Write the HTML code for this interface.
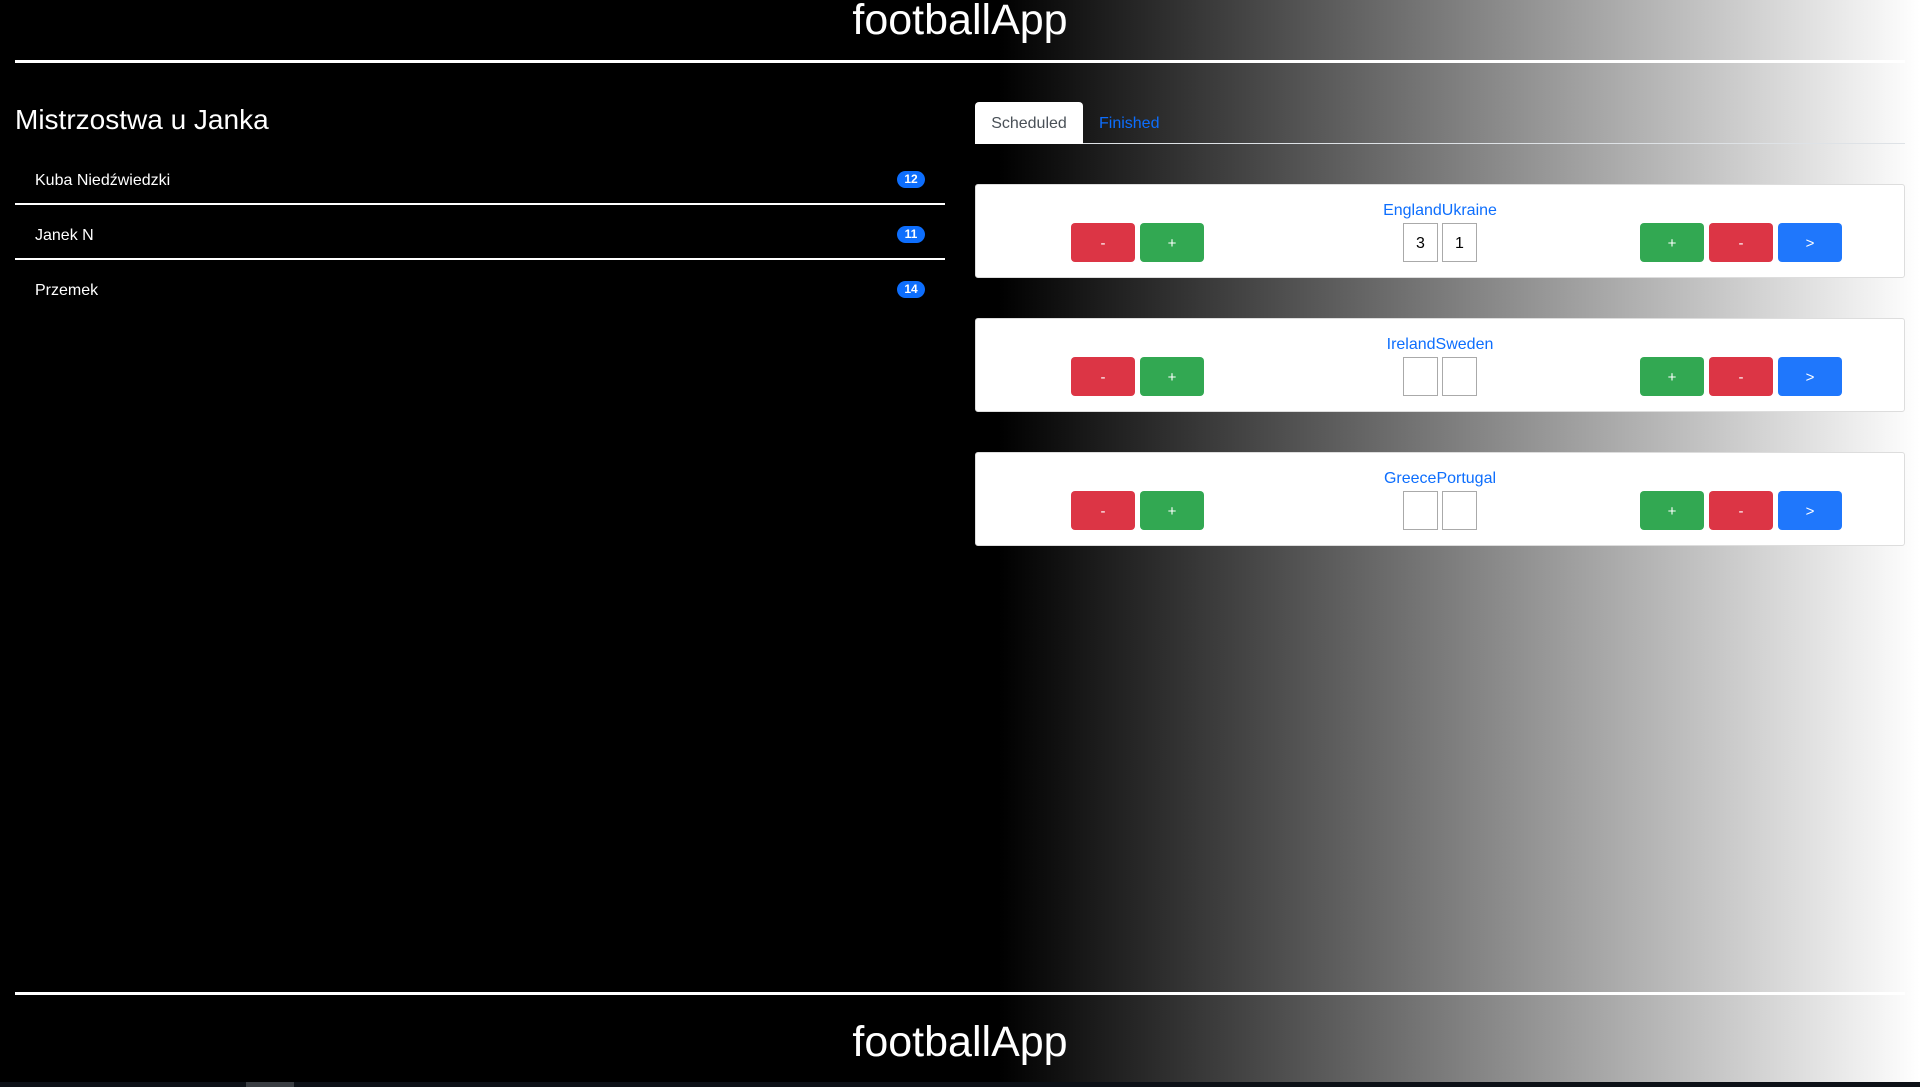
<!DOCTYPE html>
<html><head><meta charset="utf-8"><style>
*{box-sizing:border-box;margin:0;padding:0}
html,body{width:1920px;height:1087px;overflow:hidden}
body{background:linear-gradient(to right,#000 52%,#fff 100%);font-family:"Liberation Sans",sans-serif;color:#fff;position:relative}
.abs{position:absolute}
.h1{font-size:43px;width:1920px;text-align:center;left:0}
.hr{left:15px;width:1890px;height:3px;background:#fff}
.item{left:35px;font-size:16px}
.sep{left:15px;width:930px;height:2px;background:#fff}
.badge{left:897px;width:28px;height:17px;border-radius:9px;background:#0d6efd;color:#fff;font-size:12px;font-weight:bold;text-align:center;line-height:17px}
.card{left:975px;width:930px;height:94px;background:#fff;border:1px solid #ddd;border-radius:3px}
.name{left:0;width:100%;text-align:center;color:#0d6efd;font-size:16px}
.btn{width:64px;height:39px;border-radius:4px;color:#fff;font-size:15px;text-align:center;line-height:41px}
.r{background:#dc3545}.g{background:#32a852}.b{background:#1f77fc}
.inp{width:35px;height:39px;border:1px solid #aaa;color:#000;font-size:16px;text-align:center;line-height:39px;background:#fff}
</style></head><body>
<div class="abs h1" style="top:-4px">footballApp</div>
<div class="abs hr" style="top:60px"></div>
<div class="abs" style="left:15px;top:104px;font-size:28px">Mistrzostwa u Janka</div>
<div class="abs item" style="top:172px">Kuba Niedźwiedzki</div>
<div class="abs badge" style="top:171px">12</div>
<div class="abs sep" style="top:203px"></div>
<div class="abs item" style="top:227px">Janek N</div>
<div class="abs badge" style="top:226px">11</div>
<div class="abs sep" style="top:258px"></div>
<div class="abs item" style="top:282px">Przemek</div>
<div class="abs badge" style="top:281px">14</div>

<div class="abs" style="left:975px;top:102px;width:108px;height:42px;background:#fff;border-radius:4px 4px 0 0;color:#495057;font-size:16px;text-align:center;line-height:44px">Scheduled</div>
<div class="abs" style="left:1099px;top:102px;height:42px;color:#0d6efd;font-size:16px;line-height:44px">Finished</div>
<div class="abs" style="left:1083px;top:143px;width:822px;height:1px;background:#dee2e6"></div>

<div class="abs card" style="top:184px">
<div class="abs name" style="top:17px">EnglandUkraine</div>
<div class="abs btn r" style="left:95px;top:38px">-</div>
<div class="abs btn g" style="left:164px;top:38px">+</div>
<div class="abs inp" style="left:427px;top:38px">3</div>
<div class="abs inp" style="left:466px;top:38px">1</div>
<div class="abs btn g" style="left:664px;top:38px">+</div>
<div class="abs btn r" style="left:733px;top:38px">-</div>
<div class="abs btn b" style="left:802px;top:38px">&gt;</div>
</div>
<div class="abs card" style="top:318px">
<div class="abs name" style="top:17px">IrelandSweden</div>
<div class="abs btn r" style="left:95px;top:38px">-</div>
<div class="abs btn g" style="left:164px;top:38px">+</div>
<div class="abs inp" style="left:427px;top:38px"></div>
<div class="abs inp" style="left:466px;top:38px"></div>
<div class="abs btn g" style="left:664px;top:38px">+</div>
<div class="abs btn r" style="left:733px;top:38px">-</div>
<div class="abs btn b" style="left:802px;top:38px">&gt;</div>
</div>
<div class="abs card" style="top:452px">
<div class="abs name" style="top:17px">GreecePortugal</div>
<div class="abs btn r" style="left:95px;top:38px">-</div>
<div class="abs btn g" style="left:164px;top:38px">+</div>
<div class="abs inp" style="left:427px;top:38px"></div>
<div class="abs inp" style="left:466px;top:38px"></div>
<div class="abs btn g" style="left:664px;top:38px">+</div>
<div class="abs btn r" style="left:733px;top:38px">-</div>
<div class="abs btn b" style="left:802px;top:38px">&gt;</div>
</div>

<div class="abs hr" style="top:992px"></div>
<div class="abs h1" style="top:1018px">footballApp</div>
<div class="abs" style="left:0;top:1082px;width:1920px;height:5px;background:#0d1117"></div>
<div class="abs" style="left:246px;top:1082px;width:48px;height:5px;background:#3a3d42"></div>
</body></html>
